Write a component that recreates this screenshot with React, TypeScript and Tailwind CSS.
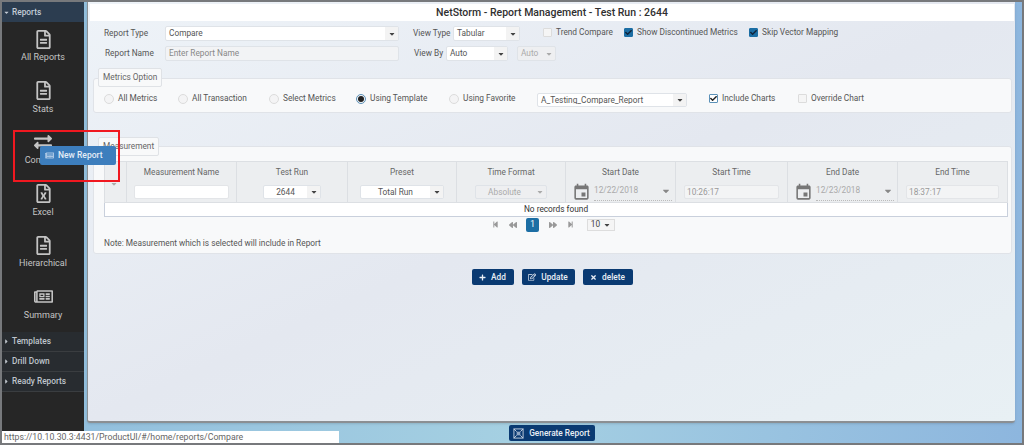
import { ReactNode } from "react";
import {
  FaRegFileAlt,
  FaExchangeAlt,
  FaRegFileExcel,
  FaRegNewspaper,
  FaNewspaper,
  FaCaretDown,
  FaCaretRight,
  FaPlus,
  FaRegEdit,
  FaTimes,
  FaStepBackward,
  FaStepForward,
  FaBackward,
  FaForward,
  FaCheck,
} from "react-icons/fa";
import { MdEvent } from "react-icons/md";

const sideItems = [
  { label: "All Reports", icon: <FaRegFileAlt className="text-[19px]" /> },
  { label: "Stats", icon: <FaRegFileAlt className="text-[19px]" /> },
  { label: "Compare", icon: <FaExchangeAlt className="text-[18px]" /> },
  { label: "Excel", icon: <FaRegFileExcel className="text-[19px]" /> },
  { label: "Hierarchical", icon: <FaRegFileAlt className="text-[19px]" /> },
  { label: "Summary", icon: <FaRegNewspaper className="text-[19px]" /> },
];

function Select({ value, className, disabled, center, short }: { value: string; className: string; disabled?: boolean; center?: boolean; short?: boolean }) {
  return (
    <div className={`flex items-center rounded-[2px] border border-[#dfe3e8] ${short ? "h-[14px]" : "h-[15px]"} ${disabled ? "bg-[#eeeff1] text-[#aaa]" : "bg-white text-[#555]"} ${className}`}>
      <span className={`flex-1 truncate px-[3px] ${center ? "text-center" : ""}`}>{value}</span>
      <span className={`flex h-full w-[13px] items-center justify-center ${disabled ? "text-[#aaa]" : "bg-[#f3f3f3] text-[#444]"}`}>
        <FaCaretDown className="text-[8px]" />
      </span>
    </div>
  );
}

function Radio({ label, on, className }: { label: string; on?: boolean; className: string }) {
  return (
    <div className={`flex items-center gap-[4px] ${className}`}>
      <span className={`flex h-[10px] w-[10px] items-center justify-center rounded-full border bg-[#f4f4f5] ${on ? "border-[#5b91b8]" : "border-[#dcdcdc]"}`}>
        {on && <span className="h-[6px] w-[6px] rounded-full bg-[#222]" />}
      </span>
      <span>{label}</span>
    </div>
  );
}

function Check({ label, on, white, className }: { label: string; on?: boolean; white?: boolean; className: string }) {
  return (
    <div className={`flex items-center gap-[4px] ${className}`}>
      <span
        className={`flex h-[9px] w-[9px] items-center justify-center rounded-[1px] border ${
          on && !white ? "border-[#1c6ea4] bg-[#1c6ea4] text-[#10243a]" : on ? "border-[#5b91b8] bg-white text-[#222]" : "border-[#dcdcdc] bg-[#f5f5f5]"
        }`}
      >
        {on && <FaCheck className="text-[7px]" />}
      </span>
      <span>{label}</span>
    </div>
  );
}

function Legend({ children, className }: { children: ReactNode; className: string }) {
  return (
    <div className={`absolute left-[4px] flex h-[19px] items-center rounded-[2px] border border-[#dfe2e6] bg-[#f8f9fa] px-[4px] text-[#666] ${className}`}>
      {children}
    </div>
  );
}

function Blue({ icon, label, className }: { icon: ReactNode; label: string; className: string }) {
  return (
    <button className={`flex h-[16px] items-center justify-center gap-[5px] rounded-[2px] bg-[#0a3a72] font-medium text-[#e9eef5] ${className}`}>
      {icon}
      {label}
    </button>
  );
}

function DateCell({ value }: { value: string }) {
  return (
    <div className="flex items-center pl-[6px] pr-[3px] text-[#aaa]">
      <MdEvent className="mr-[3px] mt-[-2px] shrink-0 text-[19px] text-[#777]" />
      <div className="mt-[-1px] flex h-[16px] flex-1 items-start justify-between border-b border-dotted border-[#bbb] pr-[1px] pt-[1px]">
        <span>{value}</span>
        <FaCaretDown className="text-[10px] text-[#888]" />
      </div>
    </div>
  );
}

function HeadCell({ title, children, className }: { title: string; children: ReactNode; className: string }) {
  return (
    <div className={`flex flex-col border-r border-[#dcdfe3] pt-[6px] ${className}`}>
      <div className="h-[17px] text-center text-[#666]">{title}</div>
      {children}
    </div>
  );
}

function TimeBox({ value }: { value: string }) {
  return (
    <div className="mx-[8px] flex h-[14px] items-center rounded-[2px] border border-[#e3e5e8] bg-[#f3f4f5] px-[2px] text-[#999]">{value}</div>
  );
}

function GenerateIcon() {
  return (
    <svg viewBox="0 0 12 12" className="h-[11px] w-[11px]" fill="none" stroke="#c9d4e2" strokeWidth="1">
      <rect x="1" y="1" width="10" height="10" />
      <path d="M1 1l3 3M11 1l-3 3M1 11l3-3M11 11l-3-3" />
      <rect x="4" y="4" width="4" height="4" fill="#8fa6c4" stroke="none" />
    </svg>
  );
}

export default function App() {
  return (
    <div className="relative flex h-[445px] w-[1024px] overflow-hidden border-2 border-[#77797c] bg-gradient-to-r from-[#8fbcdc] via-[#a5d0e2] to-[#8db6de] font-['Roboto',sans-serif] text-[8.3px] leading-none text-[#555]">
      {/* sidebar */}
      <aside className="flex h-full w-[82px] shrink-0 flex-col bg-[#262626] text-[#c9c9c9]">
        <div className="flex h-[20px] items-center gap-[2px] bg-[#2c3d50] pl-[1px] font-medium text-[#c3ccd6]">
          <FaCaretDown className="text-[7px]" />
          Reports
        </div>
        <div className="flex flex-col">
          {sideItems.map((s) => (
            <div key={s.label} className="flex h-[51.6px] flex-col items-center pt-[8px] text-[9px] text-[#c4c4c4]">
              <div className="flex h-[18px] items-center">{s.icon}</div>
              <div className="mt-[5px]">{s.label}</div>
            </div>
          ))}
        </div>
        <div className="flex flex-col font-medium text-[#bfc5cc]">
          {["Templates", "Drill Down", "Ready Reports"].map((t) => (
            <div key={t} className="flex h-[20px] items-center gap-[2px] border-b border-[#3a3d40] bg-[#282c30] pl-[1px]">
              <FaCaretRight className="text-[7px]" />
              {t}
            </div>
          ))}
        </div>
      </aside>

      {/* main */}
      <div className="flex flex-1 flex-col pl-[4px] pr-[7px]">
        <main className="ml-[-1px] flex h-[421px] flex-col rounded-b-[3px] border-b-2 border-l border-[#8b8f93] bg-gradient-to-br from-[#eef3f8] via-[#e4e8f0] to-[#e8f0f4] pl-[2px] pr-[1px] pt-[2px] shadow-sm">
          <div className="flex h-[17px] items-center justify-center bg-white pt-[1px] text-[10.5px] font-medium text-[#2f2f2f]">
            NetStorm - Report Management - Test Run : 2644
          </div>

          <div className="mt-[5px] flex h-[15px] items-center">
            <span className="ml-[14px] w-[61px]">Report Type</span>
            <Select value="Compare" className="w-[234px]" />
            <span className="ml-[14px] w-[40px]">View Type</span>
            <Select value="Tabular" className="w-[67px]" />
            <Check label="Trend Compare" className="mb-[3px] ml-[23px] w-[81px]" />
            <Check label="Show Discontinued Metrics" on className="mb-[3px] w-[125px]" />
            <Check label="Skip Vector Mapping" on className="mb-[3px]" />
          </div>
          <div className="mt-[5px] flex h-[15px] items-center">
            <span className="ml-[15px] w-[60px]">Report Name</span>
            <div className="flex h-[15px] w-[234px] items-center rounded-[2px] border border-[#dfe3e8] bg-[#f2f3f5] px-[3px] text-[#888]">Enter Report Name</div>
            <span className="ml-[15px] w-[32px]">View By</span>
            <Select value="Auto" className="w-[62px]" />
            <Select value="Auto" disabled className="ml-[9px] w-[39px]" />
          </div>

          {/* metrics option */}
          <section className="relative ml-[3px] mr-[2px] mt-[17px] flex h-[35px] items-center rounded-[3px] border border-[#e0e3e8] bg-[#f8f9fa] pt-[6px]">
            <Legend className="top-[-11px]">Metrics Option</Legend>
            <Radio label="All Metrics" className="ml-[10px] w-[74px]" />
            <Radio label="All Transaction" className="w-[91px]" />
            <Radio label="Select Metrics" className="w-[87px]" />
            <Radio label="Using Template" on className="w-[93px]" />
            <Radio label="Using Favorite" className="w-[88px]" />
            <Select value="A_Testing_Compare_Report" short className="mt-[3px] w-[150px]" />
            <Check label="Include Charts" on white className="ml-[22px] w-[89px]" />
            <Check label="Override Chart" className="" />
          </section>

          {/* measurement */}
          <section className="relative ml-[3px] mr-[2px] mt-[33px] h-[108px] rounded-[3px] border border-[#e0e3e8] bg-[#f8f9fa] pl-[10px] pr-[3px] pt-[14px]">
            <Legend className="top-[-10px]">Measurement</Legend>
            <div className="grid h-[42px] grid-cols-[22px_110px_111px_109px_109px_110px_112px_110px_1fr] border border-[#dcdfe3] bg-[#eceef0]">
              <div className="flex items-center justify-center border-r border-[#dcdfe3] pr-[4px] pt-[4px] text-[#aaa]">
                <FaCaretDown className="text-[8px]" />
              </div>
              <HeadCell title="Measurement Name" className="">
                <div className="mx-[7px] h-[14px] rounded-[2px] border border-[#e3e5e8] bg-white" />
              </HeadCell>
              <HeadCell title="Test Run" className="">
                <Select value="2644" center short className="mx-[26px]" />
              </HeadCell>
              <HeadCell title="Preset" className="">
                <Select value="Total Run" center short className="mx-[12px]" />
              </HeadCell>
              <HeadCell title="Time Format" className="">
                <Select value="Absolute" center short disabled className="mx-[18px]" />
              </HeadCell>
              <HeadCell title="Start Date" className="">
                <DateCell value="12/22/2018" />
              </HeadCell>
              <HeadCell title="Start Time" className="">
                <TimeBox value="10:26:17" />
              </HeadCell>
              <HeadCell title="End Date" className="">
                <DateCell value="12/23/2018" />
              </HeadCell>
              <HeadCell title="End Time" className="border-r-0">
                <TimeBox value="18:37:17" />
              </HeadCell>
            </div>
            <div className="flex h-[14px] items-center justify-center border-x border-b border-[#c9d0dc] bg-white text-[#333]">No records found</div>

            <div className="flex h-[15px] items-center text-[#999]">
              <FaStepBackward className="ml-[388px] text-[7px]" />
              <FaBackward className="ml-[10px] text-[8px]" />
              <span className="ml-[9px] flex h-[14px] w-[13px] items-center justify-center rounded-[2px] bg-[#1c6ea4] text-white">1</span>
              <FaForward className="ml-[10px] text-[8px]" />
              <FaStepForward className="ml-[10px] text-[7px]" />
              <span className="ml-[13px] flex h-[12px] w-[28px] items-center justify-center gap-[3px] border border-[#ddd] bg-[#f5f5f5] text-[#444]">
                10 <FaCaretDown className="text-[8px]" />
              </span>
            </div>
            <div className="mt-[7px]">Note: Measurement which is selected will include in Report</div>
          </section>

          <div className="mt-[15px] flex justify-center gap-[8px]">
            <Blue icon={<FaPlus className="text-[7px]" />} label="Add" className="w-[42px]" />
            <Blue icon={<FaRegEdit className="text-[8px]" />} label="Update" className="w-[53px]" />
            <Blue icon={<FaTimes className="text-[7px]" />} label="delete" className="w-[50px]" />
          </div>
        </main>

        <div className="flex h-[20px] items-center justify-center">
          <Blue icon={<GenerateIcon />} label="Generate Report" className="w-[86px]" />
        </div>
      </div>

      {/* overlays */}
      <div className="absolute left-[11px] top-[128px] h-[52px] w-[107px] border-2 border-[#f01820]" />
      <div className="absolute left-[38px] top-[144px] flex h-[19px] w-[76px] items-center gap-[4px] rounded-[2px] bg-[#3d7ebd] pl-[5px] text-[8.5px] font-medium text-[#e4edf6]">
        <FaNewspaper className="text-[9px] text-[#a9c6e4]" />
        New Report
      </div>
      <div className="absolute bottom-0 left-0 flex h-[12px] w-[337px] items-center bg-white pl-[2px] pt-[1px] text-[8.75px] text-[#666]">
        https://10.10.30.3:4431/ProductUI/#/home/reports/Compare
      </div>
    </div>
  );
}
